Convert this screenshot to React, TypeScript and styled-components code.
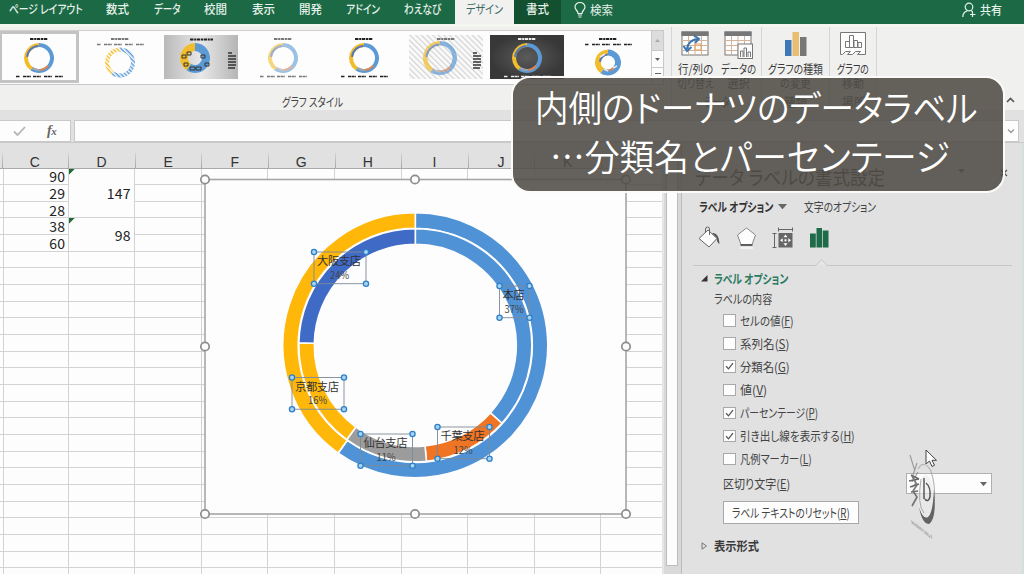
import React, { useLayoutEffect, useRef, useState } from "react";
import styled, { createGlobalStyle, css } from "styled-components";

const Global = createGlobalStyle`
  html, body { margin: 0; padding: 0; overflow: hidden; }
  body { font-family: "Noto Sans CJK JP", "Noto Sans", sans-serif; font-size: 12px; color: #444; }
  *, *::before, *::after { box-sizing: border-box; }
`;

/* Condensed UI lettering: the text is squeezed to the width of its slot. */
const FitBox = styled.span<{ $w: number }>`
  display: inline-block;
  flex: none;
  width: ${(p) => p.$w}px;
  white-space: nowrap;
  text-align: left;
`;
const FitInk = styled.span`
  display: inline-block;
  transform-origin: 0 50%;
  font-feature-settings: "palt";
`;
function Fit({ w, children }: { w: number; children: React.ReactNode }) {
  const ref = useRef<HTMLSpanElement>(null);
  const [scale, setScale] = useState(1);
  useLayoutEffect(() => {
    if (ref.current) setScale(w / ref.current.offsetWidth);
  }, [w]);
  return (
    <FitBox $w={w}>
      <FitInk ref={ref} style={{ transform: `scaleX(${scale})` }}>{children}</FitInk>
    </FitBox>
  );
}

const Window = styled.div`
  position: relative;
  width: 1024px;
  height: 574px;
  overflow: hidden;
  display: flex;
  flex-direction: column;
  background: #e2e2e2;
`;

/* ---------- tab bar ---------- */
const TabBar = styled.nav`
  display: flex;
  flex: none;
  height: 24px;
  background: #1c6a45;
  color: #e6f1ea;
`;
const Tab = styled.div<{ $w: number; $kind?: "active" | "dark" }>`
  width: ${(p) => p.$w}px;
  flex: none;
  display: flex;
  justify-content: center;
  font-size: 12px;
  line-height: 18px;
  font-weight: 500;
  ${(p) => p.$kind === "active" && css`background: #f1f1f0; color: #3b6a64; font-weight: 400;`}
  ${(p) => p.$kind === "dark" && css`background: #12502f;`}
`;
const Search = styled.div`
  display: flex;
  gap: 4px;
  padding: 2px 0 0 13px;
  line-height: 15px;
`;
const Share = styled(Search)`
  margin-left: auto;
  padding: 2px 22px 0 0;
  font-weight: 500;
`;

/* ---------- ribbon ---------- */
const Ribbon = styled.section`
  display: flex;
  flex: none;
  height: 86px;
  background: #f0f0ef;
  border-top: 3px solid #f3f6ef;
`;
const GalleryGroup = styled.div`
  width: 672px;
  flex: none;
  padding-top: 3px;
  border-right: 1px solid #d6d6d6;
`;
const GalleryRow = styled.div`
  display: flex;
  height: 55px;
`;
const Gallery = styled.div`
  display: flex;
  width: 651px;
  padding-left: 0;
  overflow: hidden;
  background: #fdfdfd;
  border-top: 1px solid #d0cfcd;
  border-bottom: 1px solid #c8c8c8;
`;
const Thumb = styled.div<{ $on?: boolean }>`
  flex: none;
  width: 81.4px;
  margin-left: ${(p) => (p.$on ? "-1px" : 0)};
  height: 52px;
  padding: 4px 3.5px;
  position: relative;
  ${(p) => p.$on && css`padding: 1px 0 0; border: 3px solid #c3c3c3; width: 80.4px; padding: 1px 0;`}
  svg { display: block; margin: 0 auto; }
`;
const Spinner = styled.div`
  width: 13px;
  display: flex;
  flex-direction: column;
  border: 1px solid #c9c9c9;
  border-bottom: 0;
`;
const SpinCell = styled.div<{ $h: number; $off?: boolean }>`
  height: ${(p) => p.$h}px;
  display: flex;
  align-items: center;
  justify-content: center;
  background: ${(p) => (p.$off ? "#dcdcdc" : "#fdfdfd")};
  border-bottom: 1px solid #c9c9c9;
`;
const GroupCaption = styled.div`
  display: flex;
  justify-content: center;
  padding-left: 0;
  width: 624px;
  font-size: 12px;
  line-height: 17px;
  color: #444;
  padding-top: 8px;
`;
const Group = styled.div<{ $w: number }>`
  width: ${(p) => p.$w}px;
  flex: none;
  border-right: 1px solid #d6d6d6;
  display: flex;
  flex-direction: column;
`;
const GroupButtons = styled.div`
  display: flex;
  justify-content: center;
  gap: 7px;
  padding-top: 4px;
  height: 66px;
`;
const Command = styled.div`
  display: flex;
  flex-direction: column;
  align-items: center;
  font-size: 12px;
  line-height: 14px;
  color: #3c3c3c;
  svg { margin-bottom: 3px; flex: none; }
`;
const Caption = styled.div`
  display: flex;
  justify-content: center;
  line-height: 17px;
  font-size: 12px;
`;
const Collapse = styled.div`
  margin: auto 9px 3px auto;
  height: 10px;
  svg { display: block; }
`;

/* ---------- formula bar ---------- */
const FormulaBar = styled.section`
  display: flex;
  flex: none;
  height: 33px;
  gap: 3px;
  padding: 10px 5px 0 0;
  border-bottom: 1px solid #c9c9c9;
  background: #e1e1e1;
`;
const FormulaButtons = styled.div`
  width: 71px;
  flex: none;
  background: #fdfdfd;
  border: 1px solid #c9c9c9;
  border-left: 0;
  display: flex;
  align-items: center;
  padding-left: 13px;
  gap: 21px;
`;
const Fx = styled.span`
  font: italic bold 14px "Liberation Serif", serif;
  color: #666;
  letter-spacing: -0.5px;
  small { font-size: 11px; }
`;
const FormulaInput = styled.div`
  flex: 1;
  background: #fdfdfd;
  border: 1px solid #c9c9c9;
  display: flex;
  align-items: center;
  justify-content: flex-end;
  padding-right: 3px;
`;

/* ---------- work area ---------- */
const WorkArea = styled.main`
  flex: 1;
  min-height: 0;
  display: flex;
`;
const Sheet = styled.div`
  position: relative;
  width: 662px;
  flex: none;
  overflow: hidden;
  background: #fdfdfd;
`;
const HeaderRow = styled.div`
  display: flex;
  height: 25.5px;
  padding-left: 1.6px;
  background: #e1e1e1;
  border-bottom: 1px solid #a9a9a9;
`;
const ColumnHead = styled.div`
  flex: none;
  width: 66.6px;
  position: relative;
  text-align: center;
  font: 14px/16px "Liberation Sans", sans-serif;
  padding-top: 10.5px;
  color: #333;
  background: linear-gradient(#d2d2d2, #a4a4a4) left 10px / 1px 16px no-repeat;
`;
const CellGrid = styled.div`
  display: grid;
  grid-template-columns: 2.1px repeat(10, 66.6px);
  grid-auto-rows: 16.66px;
`;
const Cell = styled.div<{ $span?: number; $flag?: boolean }>`
  grid-row: span ${(p) => p.$span ?? 1};
  border-right: 1px solid #d3d3d3;
  border-bottom: 1px solid #d3d3d3;
  display: flex;
  align-items: center;
  justify-content: flex-end;
  padding: 0 2.5px 0 0;
  font: 14px/14px "Noto Sans CJK JP", sans-serif;
  letter-spacing: 0.2px;
  color: #222;
  ${(p) => p.$flag && css`
    padding-right: 3.5px;
    background: linear-gradient(135deg, #1f6b35 0 4px, transparent 4.3px) 0 0 / 7px 7px no-repeat;
  `}
`;
const ChartObject = styled.svg`
  position: absolute;
  left: 198px;
  top: 29px;
  font-family: "Noto Sans CJK JP", sans-serif;
`;
const ScrollStrip = styled.div`
  width: 20px;
  flex: none;
  background: #d9d9d9;
  border-left: 2px solid #e6e6e6;
  border-right: 1px solid #bcbcbc;
  padding: 13px 3px 8px 2px;
  display: flex;
`;
const ScrollThumb = styled.div`
  flex: 1;
  background: #fdfdfd;
  border: 1px solid #bdbdbd;
`;

/* ---------- format pane ---------- */
const Pane = styled.aside`
  flex: 1;
  min-width: 0;
  background: #e1e1e1;
  border-right: 2px solid #d3e0dc;
  padding-left: 11px;
  color: #444;
`;
const PaneTitle = styled.div`
  display: flex;
  align-items: center;
  height: 52px;
  padding: 16px 14px 0 2px;
  font-size: 19px;
  line-height: 24px;
  color: #333;
`;
const TitleMarks = styled.div`
  margin-left: auto;
  display: flex;
  gap: 35px;
  padding-bottom: 9px;
`;
const PaneTabs = styled.div`
  display: flex;
  align-items: center;
  gap: 5px;
  height: 23px;
  padding-left: 6px;
  font-size: 12.5px;
  b { font-weight: 700; color: #333; }
`;
const SecondTab = styled.span`
  padding-left: 12px;
`;
const IconRow = styled.div`
  display: flex;
  padding: 8px 0 0 4px;
  height: 38px;
  gap: 10px;
`;
const Notch = styled.svg`
  display: block;
`;
const Section = styled.div<{ $green?: boolean }>`
  display: flex;
  align-items: center;
  gap: 6px;
  height: 20px;
  padding-left: 8px;
  font-weight: 700;
  font-size: 12.5px;
  color: ${(p) => (p.$green ? "#2b7a62" : "#3a3a3a")};
`;
const SubTitle = styled.div`
  height: 21px;
  padding-left: 21px;
  line-height: 21px;
  font-size: 12.5px;
`;
const Option = styled.label`
  display: flex;
  align-items: center;
  gap: 4.5px;
  height: 23.1px;
  padding-left: 30px;
  font-size: 12.5px;
  line-height: 20px;
`;
const Box = styled.span`
  width: 12.5px;
  height: 12.5px;
  flex: none;
  border: 1px solid #a8a8a8;
  background: #fdfdfd;
  svg { display: block; }
`;
const SeparatorRow = styled.div`
  display: flex;
  align-items: center;
  justify-content: space-between;
  height: 26px;
  padding: 0 30px 0 30px;
  font-size: 12.5px;
`;
const Combo = styled.div`
  width: 86px;
  height: 21px;
  border: 1px solid #b0b0b0;
  background: #fdfdfd;
  display: flex;
  align-items: center;
  justify-content: flex-end;
  padding-right: 4px;
`;
const ResetButton = styled.div`
  width: 136px;
  height: 23px;
  margin: 4px 0 12px 30px;
  border: 1px solid #a8a8a8;
  background: #fdfdfd;
  display: flex;
  align-items: center;
  justify-content: center;
  font-size: 12.5px;
`;

/* ---------- overlays ---------- */
const Telop = styled.div`
  position: absolute;
  left: 510.5px;
  top: 76px;
  width: 494px;
  height: 117px;
  border: 2px solid #fbfbfa;
  border-radius: 19px;
  background: rgba(80, 76, 71, 0.88);
  color: #fff;
  font-size: 36.5px;
  font-weight: 350;
  line-height: 48px;
  padding: 5px 0 0 22px;
  display: flex;
  flex-direction: column;
`;
const TelopLine = styled.div<{ $indent?: number }>`
  height: 49px;
  padding-left: ${(p) => p.$indent ?? 0}px;
`;
const Watermark = styled.svg`
  position: absolute;
  left: 900px;
  top: 445px;
`;

/* ---------- drawings ---------- */
const BLUE = "#5092d6";
const YELLOW = "#ffb80a";

function arc(cx: number, cy: number, r0: number, r1: number, a0: number, a1: number) {
  const pt = (r: number, a: number) => {
    const t = (a * Math.PI) / 180;
    return `${(cx + r * Math.sin(t)).toFixed(2)} ${(cy - r * Math.cos(t)).toFixed(2)}`;
  };
  const big = a1 - a0 > 180 ? 1 : 0;
  return `M${pt(r1, a0)}A${r1} ${r1} 0 ${big} 1 ${pt(r1, a1)}L${pt(r0, a1)}A${r0} ${r0} 0 ${big} 0 ${pt(r0, a0)}Z`;
}

const Down = ({ s = 7, c = "#666" }: { s?: number; c?: string }) => (
  <svg width={s} height={s * 0.6} viewBox="0 0 10 6"><path d="M0 0h10L5 6z" fill={c} /></svg>
);

type ThumbKind = "plain" | "hatch" | "gray" | "pale" | "stripe" | "dark" | "thick";
function MiniChart({ kind }: { kind: ThumbKind }) {
  const dark = kind === "dark";
  const side = kind === "gray" || kind === "stripe";
  const topLegend = kind === "hatch" || kind === "thick";
  const cy = topLegend ? 27.5 : 23;
  const cx = side ? 31 : 37;
  const r1 = kind === "thick" ? 13 : kind === "stripe" ? 17 : 15;
  const r0 = kind === "gray" || kind === "thick" ? 7 : kind === "stripe" ? 12.5 : 11;
  const ink = dark ? "#eee" : kind === "hatch" || kind === "pale" || kind === "stripe" ? "#777" : "#222";
  const op = kind === "pale" ? 0.6 : kind === "stripe" ? 0.7 : 1;
  return (
    <svg width="74" height="44" viewBox="0 0 74 44">
      <defs>
        <linearGradient id="gGray" x1="0" x2="1"><stop offset="0" stopColor="#b9b9b9" /><stop offset=".5" stopColor="#e8e8e8" /><stop offset="1" stopColor="#b5b5b5" /></linearGradient>
        <radialGradient id="gDark"><stop offset="0" stopColor="#5b5b5b" /><stop offset="1" stopColor="#383838" /></radialGradient>
        <pattern id="pStripe" width="4" height="4" patternUnits="userSpaceOnUse" patternTransform="rotate(-45)"><rect width="4" height="4" fill="#fafafa" /><rect width="1.2" height="4" fill="#d3d3d3" /></pattern>
        <pattern id="pHatch" width="3" height="3" patternUnits="userSpaceOnUse" patternTransform="rotate(-45)"><rect width="1.5" height="3" fill="#fff" /></pattern>
      </defs>
      <rect width="74" height="44" fill={kind === "gray" ? "url(#gGray)" : dark ? "url(#gDark)" : kind === "stripe" ? "url(#pStripe)" : "#fdfdfd"} />
      <g opacity={op}>
        <path d={arc(cx, cy, r0, r1, 0, 215)} fill="#5b9ad5" />
        <path d={arc(cx, cy, r0, r1, 215, 360)} fill="#f2bd2c" />
        {kind !== "gray" && kind !== "hatch" && <path d={arc(cx, cy, r0, r0 + 2, 275, 358)} fill="#5878b4" />}
        {kind !== "gray" && kind !== "hatch" && <path d={arc(cx, cy, r0, r0 + 2, 130, 175)} fill="#dd8450" />}
        {kind !== "gray" && kind !== "hatch" && <path d={arc(cx, cy, r0, r0 + 2, 176, 215)} fill="#a5a5a5" />}
      </g>
      {kind === "hatch" && <circle cx={cx} cy={cy} r="13" fill="none" stroke="url(#pHatch)" strokeWidth="4.6" />}
      {kind === "thick" && <path d="M29 22l5-3M33 34l4 2M42 33l4-2" stroke="#e9e9e9" strokeWidth="1.5" />}
      {kind === "gray" && (
        <g fill="none" stroke="#333" strokeWidth="1">
          <path d="M18 20h4v3h-4zM23 17h4v3h-4zM37 20h4v3h-4zM41 28h4v3h-4zM32 32h5v3h-5zM26 32h5v3h-5zM20 28h4v3h-4z" />
        </g>
      )}
      <path d={side && kind === "gray" ? "M26 4.5h23" : "M28 4h18"} stroke={ink} strokeWidth="2" strokeDasharray="3.5 .7 2 .6" />
      {side && <path d="M64 18h4M64 21h8M64 24h8M64 27h8M64 30h8M64 33h7" stroke="#333" strokeWidth="1.3" />}
      {!side && (
        <g stroke={ink} strokeWidth="1.5">
          {[14, 21, 31, 42, 53].map((x, i) => (
            <path key={x} d={`M${x} ${topLegend ? 9.5 : 41.5}h${i ? 8 : 4}`} strokeDasharray="3.2 .5 3 .5" />
          ))}
        </g>
      )}
    </svg>
  );
}

const TableIcon = ({ swap }: { swap?: boolean }) => (
  <svg width="29" height="28" viewBox="0 0 29 28">
    <rect x="1" y="1" width="26" height="23" fill="#fdfdfd" stroke="#777" />
    <rect x=".5" y=".5" width="27" height="4.5" fill="#777" />
    <path d="M1 9.5h26M1 14.5h26M1 19.500h26M7.500 5v19M14 5v19M20.500 5v19" stroke="#d3b49a" fill="none" />
    {swap ? (
      <g fill="none" stroke="#3b76b5" strokeWidth="2">
        <path d="M6 18Q7 9 17 8" /><path d="M13 4.500l5 3.500-4 4M2.500 15l3.500 5 4.500-4" />
        <rect x="14" y="13" width="6" height="6" stroke="#e39b55" strokeWidth="1" />
      </g>
    ) : (
      <g><rect x="14" y="13" width="14.500" height="14.500" fill="#fdfdfd" stroke="#777" /><path d="M16.500 26v-6h2.500v6M20 26v-9h2.500v9M24 26v-5h2.500v5" fill="none" stroke="#777" /></g>
    )}
  </svg>
);
const TypeIcon = () => (
  <svg width="24" height="28" viewBox="0 0 24 28">
    <path d="M1 9h6.500v16H1z" fill="#3f78b8" /><path d="M8.500 1h6.500v24H8.500z" fill="#e9bd72" /><path d="M16 6h6.500v19H16z" fill="#777" />
  </svg>
);
const MoveIcon = () => (
  <svg width="28" height="28" viewBox="0 0 28 28">
    <path d="M1.500 1.500h25v22h-8l3-3h-5l-3 3H8.500l3-3h-5l-3 3h-2z" fill="#fdfdfd" stroke="#777" />
    <path d="M6.500 16.500v-6h4v6zM10.500 16.500v-12h4v12zM15 16.500v-7h3.500v7zM19 16.500v-5h3.500v5z" fill="#fff" stroke="#777" />
  </svg>
);

const tabs: { t: string; w: number; fit: number; kind?: "active" | "dark" }[] = [
  { t: "ページ レイアウト", w: 92, fit: 74 },
  { t: "数式", w: 51, fit: 23 },
  { t: "データ", w: 48, fit: 27 },
  { t: "校閲", w: 49, fit: 23 },
  { t: "表示", w: 46, fit: 23 },
  { t: "開発", w: 49, fit: 23 },
  { t: "アドイン", w: 55, fit: 34 },
  { t: "わえなび", w: 65, fit: 37 },
  { t: "デザイン", w: 59, fit: 37, kind: "active" },
  { t: "書式", w: 47, fit: 23, kind: "dark" },
];
const thumbs: ThumbKind[] = ["plain", "hatch", "gray", "pale", "plain", "stripe", "dark", "thick"];
const colC = [90, 29, 28, 38, 60];
const options: { t: string; k: string; w: number; on?: boolean }[] = [
  { t: "セルの値", k: "F", w: 54 },
  { t: "系列名", k: "S", w: 49 },
  { t: "分類名", k: "G", w: 50, on: true },
  { t: "値", k: "V", w: 27 },
  { t: "パーセンテージ", k: "P", w: 78, on: true },
  { t: "引き出し線を表示する", k: "H", w: 115, on: true },
  { t: "凡例マーカー", k: "L", w: 72 },
];
const labels = [
  { name: "大阪支店", pct: "24%", x: 314, y: 252, w: 52, tw: 44 },
  { name: "本店", pct: "37%", x: 499.500, y: 286, w: 30, tw: 22 },
  { name: "京都支店", pct: "16%", x: 292, y: 377.500, w: 52, tw: 44 },
  { name: "仙台支店", pct: "11%", x: 360.500, y: 434, w: 52, tw: 44 },
  { name: "千葉支店", pct: "12%", x: 437.500, y: 427, w: 52, tw: 44 },
];
const slices: [number, number, number, number, string][] = [
  [117, 132.500, 0, 215.600, BLUE],
  [117, 132.500, 215.600, 360, YELLOW],
  [101, 116.500, 0, 132, BLUE],
  [101, 116.500, 132, 174.500, "#ef7423"],
  [101, 116.500, 174.500, 216, "#9c9c9c"],
  [101, 116.500, 216, 271.200, YELLOW],
  [101, 116.500, 271.200, 360, "#3f6ac6"],
];

function Chart() {
  const dots: [number, number][] = [[205, 179.500], [415, 179.500], [626, 179.500], [205, 346.500], [626, 346.500], [205, 514], [415, 514], [626, 514]];
  return (
    <ChartObject width="436" height="350" viewBox="198 172 436 350">
      <rect x="205" y="179.500" width="421" height="334.500" fill="#fdfdfd" stroke="#a6a6a6" strokeWidth="1.600" />
      {slices.map(([a, b, c, d, f], i) => (
        <path key={i} d={arc(415.300, 345.300, a, b, c, d)} fill={f} stroke="#fdfdfd" strokeWidth="1.600" />
      ))}
      {labels.map((l) => (
        <g key={l.name}>
          <rect x={l.x} y={l.y} width={l.w} height="31.700" fill="none" stroke="#7c8a98" strokeWidth=".9" />
          <text x={l.x + l.w / 2 - l.tw / 2 - 1} y={l.y + 13} fontSize="11.300" textLength={l.tw} fill="#333">{l.name}</text>
          <text x={l.x + l.w / 2 - 10} y={l.y + 26.500} fontSize="10" textLength="19" lengthAdjust="spacingAndGlyphs" fill="#444">{l.pct}</text>
          {[[0, 0], [l.w, 0], [0, 31.700], [l.w, 31.700]].map(([dx, dy], i) => (
            <circle key={i} cx={l.x + dx} cy={l.y + dy} r="2.600" fill="#a5d3f2" stroke="#2e7fc6" strokeWidth="1.300" />
          ))}
        </g>
      ))}
      {dots.map(([x, y]) => (
        <circle key={`${x}-${y}`} cx={x} cy={y} r="4.200" fill="#fdfdfd" stroke="#8c8c8c" strokeWidth="1.700" />
      ))}
    </ChartObject>
  );
}

export default function App() {
  const cells: React.ReactNode[] = [];
  for (let r = 0; r < 25; r++) {
    for (let c = 0; c < 11; c++) {
      if (c === 2 && (r === 0 || r === 3)) {
        cells.push(<Cell key={`${r}-${c}`} $span={r === 0 ? 3 : 2} $flag>{r === 0 ? 147 : 98}</Cell>);
      } else if (!(c === 2 && r < 5)) {
        cells.push(<Cell key={`${r}-${c}`}>{c === 1 ? colC[r] : null}</Cell>);
      }
    }
  }
  return (
    <>
      <Global />
      <Window>
        <TabBar>
          {tabs.map((t) => (
            <Tab key={t.t} $w={t.w} $kind={t.kind}><Fit w={t.fit}>{t.t}</Fit></Tab>
          ))}
          <Search>
            <svg width="12" height="16" viewBox="0 0 12 16" fill="none" stroke="#e6f1ea" strokeWidth="1.200"><path d="M4 11.500C4 8.500 1 8 1 5a5 4.500 0 0 1 10 0c0 3-3 3.500-3 6.500zM4 13h4M4.500 15h3" /></svg>
            <Fit w={23}>検索</Fit>
          </Search>
          <Share>
            <svg width="14" height="16" viewBox="0 0 14 16" fill="none" stroke="#e6f1ea" strokeWidth="1.200"><circle cx="7" cy="5" r="3.800" /><path d="M.8 15c0-3.500 2-5.500 4.500-6.200M8.800 8.600l2 1.200M10.500 10v5M8 12.500h5.500" /></svg>
            <Fit w={22}>共有</Fit>
          </Share>
        </TabBar>

        <Ribbon>
          <GalleryGroup>
            <GalleryRow>
              <Gallery>
                {thumbs.map((k, i) => <Thumb key={i} $on={i === 0}><MiniChart kind={k} /></Thumb>)}
              </Gallery>
              <Spinner>
                <SpinCell $h={20} $off><svg width="5" height="3" viewBox="0 0 10 6"><path d="M0 6h10L5 0z" fill="#aaa" /></svg></SpinCell>
                <SpinCell $h={17}><Down s={5} /></SpinCell>
                <SpinCell $h={17}><svg width="6" height="8" viewBox="0 0 6 8"><path d="M0 1.500h6" stroke="#666" /><path d="M0 4h6L3 7z" fill="#666" /></svg></SpinCell>
              </Spinner>
            </GalleryRow>
            <GroupCaption><Fit w={61}>グラフ スタイル</Fit></GroupCaption>
          </GalleryGroup>
          <Group $w={90}>
            <GroupButtons>
              <Command><TableIcon swap /><Fit w={35}>行/列の</Fit><Fit w={37}>切り替え</Fit></Command>
              <Command><TableIcon /><Fit w={35}>データの</Fit><Fit w={23}>選択</Fit></Command>
            </GroupButtons>
            <Caption><Fit w={26}>データ</Fit></Caption>
          </Group>
          <Group $w={68}>
            <GroupButtons>
              <Command><TypeIcon /><Fit w={55}>グラフの種類</Fit><Fit w={31}>の変更</Fit></Command>
            </GroupButtons>
            <Caption><Fit w={23}>種類</Fit></Caption>
          </Group>
          <Group $w={47}>
            <GroupButtons>
              <Command><MoveIcon /><Fit w={32}>グラフの</Fit><Fit w={22}>移動</Fit></Command>
            </GroupButtons>
            <Caption><Fit w={23}>場所</Fit></Caption>
          </Group>
          <Collapse><svg width="9" height="6" viewBox="0 0 9 6"><path d="M1 5l3.500-3.500L8 5" fill="none" stroke="#555" strokeWidth="1.600" /></svg></Collapse>
        </Ribbon>

        <FormulaBar>
          <FormulaButtons>
            <svg width="13" height="10" viewBox="0 0 13 10"><path d="M1 5.500L4.500 9 12 1" fill="none" stroke="#b5b5b5" strokeWidth="1.800" /></svg>
            <Fx>f<small>x</small></Fx>
          </FormulaButtons>
          <FormulaInput>
            <svg width="8" height="5" viewBox="0 0 8 5"><path d="M1 .5l3 3 3-3" fill="none" stroke="#999" strokeWidth="1.400" /></svg>
          </FormulaInput>
        </FormulaBar>

        <WorkArea>
          <Sheet>
            <HeaderRow>
              {"CDEFGHIJKL".split("").map((c) => <ColumnHead key={c}>{c}</ColumnHead>)}
            </HeaderRow>
            <CellGrid>{cells}</CellGrid>
            <Chart />
          </Sheet>
          <ScrollStrip><ScrollThumb /></ScrollStrip>
          <Pane>
            <PaneTitle>
              <Fit w={190}>データ ラベルの書式設定</Fit>
              <TitleMarks>
                <Down />
                <svg width="8" height="8" viewBox="0 0 8 8"><path d="M1 1l6 6M7 1L1 7" stroke="#555" strokeWidth="1.300" /></svg>
              </TitleMarks>
            </PaneTitle>
            <PaneTabs>
              <b><Fit w={74}>ラベル オプション</Fit></b>
              <Down s={9} />
              <SecondTab><Fit w={72}>文字のオプション</Fit></SecondTab>
            </PaneTabs>
            <IconRow>
              <svg width="27" height="24" viewBox="0 0 27 24"><path d="M2 12.500l9-8.500 9 8.500-8 8.500z" fill="#fdfdfd" stroke="#666" /><path d="M8.500 7V3a2 2 0 0 1 4 0v6" fill="none" stroke="#666" /><path d="M15 7c4 0 7 2 7.500 11-2-1-3-3-2.500-6z" fill="#555" /></svg>
              <svg width="27" height="24" viewBox="0 0 27 24"><path d="M12.500 2l9 7-3.500 9.500H7L3.500 9z" fill="#fdfdfd" stroke="#888" /><path d="M6.500 19h12" stroke="#555" strokeWidth="1.800" /><path d="M6 22h13" stroke="#f2f2f2" strokeWidth="2" /></svg>
              <svg width="27" height="24" viewBox="0 0 27 24"><rect x="7.500" y="7" width="14" height="14.500" fill="#666" /><path d="M7.500 3.500h14M7.500 1.500v4M21.500 1.500v4M3.500 7.500v14M1.500 7.500h4M1.500 21.500h4" stroke="#666" fill="none" /><path d="M14.500 8.500l2 2.700h-4zM14.500 20l2-2.700h-4zM9 14.300l2.700-2v4zM20 14.300l-2.700-2v4z" fill="#fff" /><path d="M13.500 13.300h2v2h-2z" fill="#fff" /></svg>
              <svg width="27" height="24" viewBox="0 0 27 24"><path d="M2 7.500h5.800V21.500H2zM8.500 2h5.500v19.500H8.500zM14.700 4.500h5.800v17h-5.800z" fill="#1d6b48" /></svg>
            </IconRow>
            <Notch width="319" height="12" viewBox="0 0 319 12"><path d="M0 9.500h123l5.500-6 5.500 6h185" fill="#e6e6e6" stroke="#c6c6c6" /></Notch>
            <Section $green>
              <svg width="7" height="7" viewBox="0 0 7 7"><path d="M6.500 0v6.500H0z" fill="#333" /></svg>
              <Fit w={74}>ラベル オプション</Fit>
            </Section>
            <SubTitle><Fit w={58}>ラベルの内容</Fit></SubTitle>
            {options.map((o) => (
              <Option key={o.k}>
                <Box>{o.on && <svg width="10.500" height="10.500" viewBox="0 0 10 10"><path d="M2 5l2.300 2.500L8.500 2" fill="none" stroke="#555" strokeWidth="1.200" /></svg>}</Box>
                <Fit w={o.w}>{o.t}(<u>{o.k}</u>)</Fit>
              </Option>
            ))}
            <SeparatorRow>
              <Fit w={67}>区切り文字(<u>E</u>)</Fit>
              <Combo><Down s={7} /></Combo>
            </SeparatorRow>
            <ResetButton><Fit w={118}>ラベル テキストのリセット(<u>R</u>)</Fit></ResetButton>
            <Section>
              <svg width="7" height="8" viewBox="0 0 7 8"><path d="M1 .8v6.400L5.500 4z" fill="none" stroke="#777" /></svg>
              <Fit w={45}>表示形式</Fit>
            </Section>
          </Pane>
        </WorkArea>

        <Telop>
          <TelopLine><Fit w={443}>内側のドーナツのデータラベル</Fit></TelopLine>
          <TelopLine $indent={15}><Fit w={400}>…分類名とパーセンテージ</Fit></TelopLine>
        </Telop>

        <Watermark width="44" height="96" viewBox="0 0 44 96">
          <g opacity=".8">
            <ellipse cx="26" cy="54" rx="8" ry="24" fill="#ececec" opacity=".8" />
            <path d="M18 24Q24 14 31 26Q36 42 34 56" fill="none" stroke="#aaa" strokeWidth="1.200" />
            <path d="M34 44Q37 74 29 79Q22 79 19 62Q23 75 28 72Q33 68 34 44z" fill="#444" />
            <path d="M24 33v21M25 54Q28 58 30 52Q31 42 26 38" fill="none" stroke="#333" strokeWidth="1.500" />
            <path d="M21 34Q17 60 24 68" fill="none" stroke="#999" />
            <path d="M10 10q3 10 5 16M17 18l-4 12M18 27l-6 10" fill="none" stroke="#888" strokeWidth="1.100" />
            <path d="M11 30l8 4M9 36l10-2M10 42l9-3M11 47l7-1" fill="none" stroke="#444" strokeWidth="1.400" />
            <path d="M12 31l5 9-4 6 4 6-5 9M17 38l-5 4" fill="none" stroke="#555" strokeWidth="1.600" />
            <g transform="translate(11 78) skewY(38)" opacity=".8"><text x="0" y="0" fontFamily="Liberation Sans" fontSize="6" textLength="21" fill="#666">waenavi</text></g>
          </g>
          <path d="M26 5v14l3.500-3 2.500 5.500 2.500-1.200-2.500-5h4.500z" fill="#fff" stroke="#444" />
        </Watermark>
      </Window>
    </>
  );
}
